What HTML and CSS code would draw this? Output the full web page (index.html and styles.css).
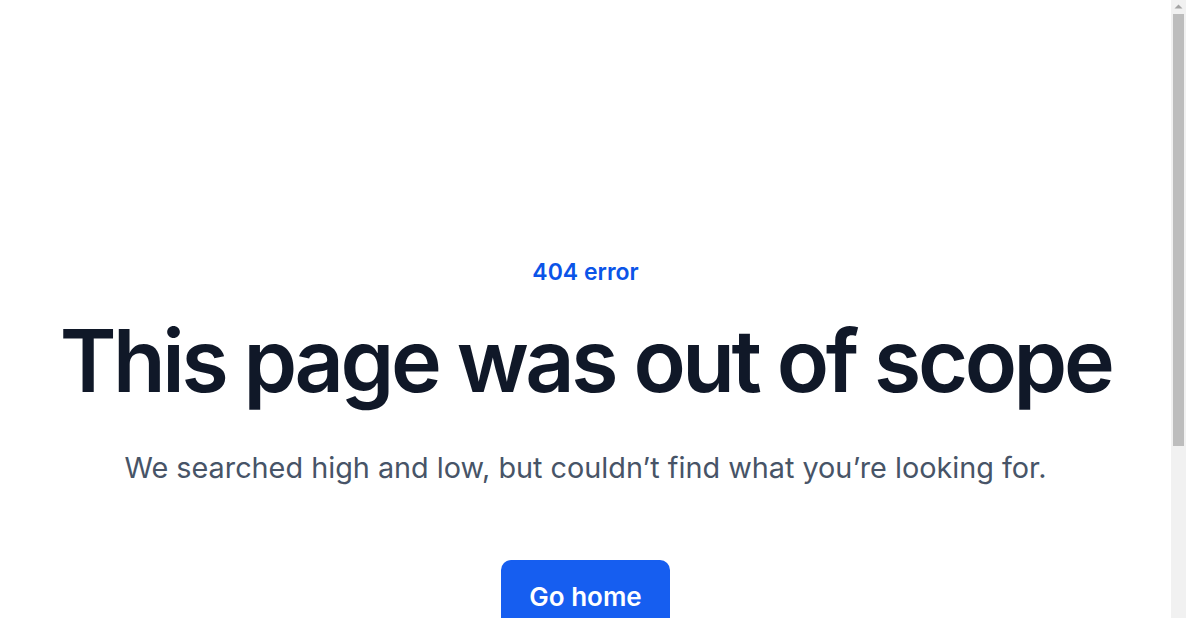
FILE: index.html
```html
<!DOCTYPE html>
<html lang="en">
<head>
<meta charset="utf-8">
<title>404 error</title>
<link rel="stylesheet" href="styles.css">
</head>
<body>
<main class="page">
  <section class="notfound">
    <p class="eyebrow">404 error</p>
    <h1 class="title">This page was out of scope</h1>
    <p class="lead">We searched high and low, but couldn’t find what you’re looking for.</p>
    <div class="actions">
      <a class="btn" href="#">Go home</a>
    </div>
  </section>
</main>
<div class="scrollbar" aria-hidden="true">
  <svg class="scroll-arrow" width="15" height="13" viewBox="0 0 15 13"><path d="M3.5 8.5 L7.5 4.5 L11.5 8.5 Z" fill="#a3a3a3"/></svg>
  <div class="scroll-thumb"></div>
</div>
</body>
</html>
```
FILE: styles.css
```css
html, body {
  margin: 0;
  padding: 0;
  background: #ffffff;
}
body {
  font-family: Inter, "Noto Sans", sans-serif;
}
.page {
  width: calc(100% - 15px);
  min-height: 850px;
  box-sizing: border-box;
  padding-top: 257px;
}
.notfound {
  display: flex;
  flex-direction: column;
  align-items: center;
  text-align: center;
}
.eyebrow {
  margin: 0;
  font-size: 23px;
  line-height: 30px;
  font-weight: 600;
  color: #0b54e8;
}
.title {
  margin: 24px 0 0;
  font-size: 86px;
  line-height: 100px;
  font-weight: 600;
  letter-spacing: -3.4px;
  color: #101828;
  white-space: nowrap;
}
.lead {
  margin: 38px 0 0;
  font-size: 28.8px;
  line-height: 38px;
  font-weight: 400;
  color: #475467;
}
.actions {
  margin-top: 73px;
  display: flex;
  justify-content: center;
}
.btn {
  display: inline-block;
  padding: 17px 28px 15px;
  background: #165ef0;
  color: #ffffff;
  font-size: 26px;
  line-height: 40px;
  font-weight: 600;
  border-radius: 10px;
  text-decoration: none;
}
.scrollbar {
  position: fixed;
  top: 0;
  right: 0;
  width: 15px;
  height: 100%;
  background: #f1f1f1;
  display: flex;
  flex-direction: column;
  align-items: center;
}
.scroll-arrow {
  display: block;
  flex: none;
}
.scroll-thumb {
  margin-top: 1px;
  width: 11px;
  height: 432px;
  background: #bdbdbd;
}
```
